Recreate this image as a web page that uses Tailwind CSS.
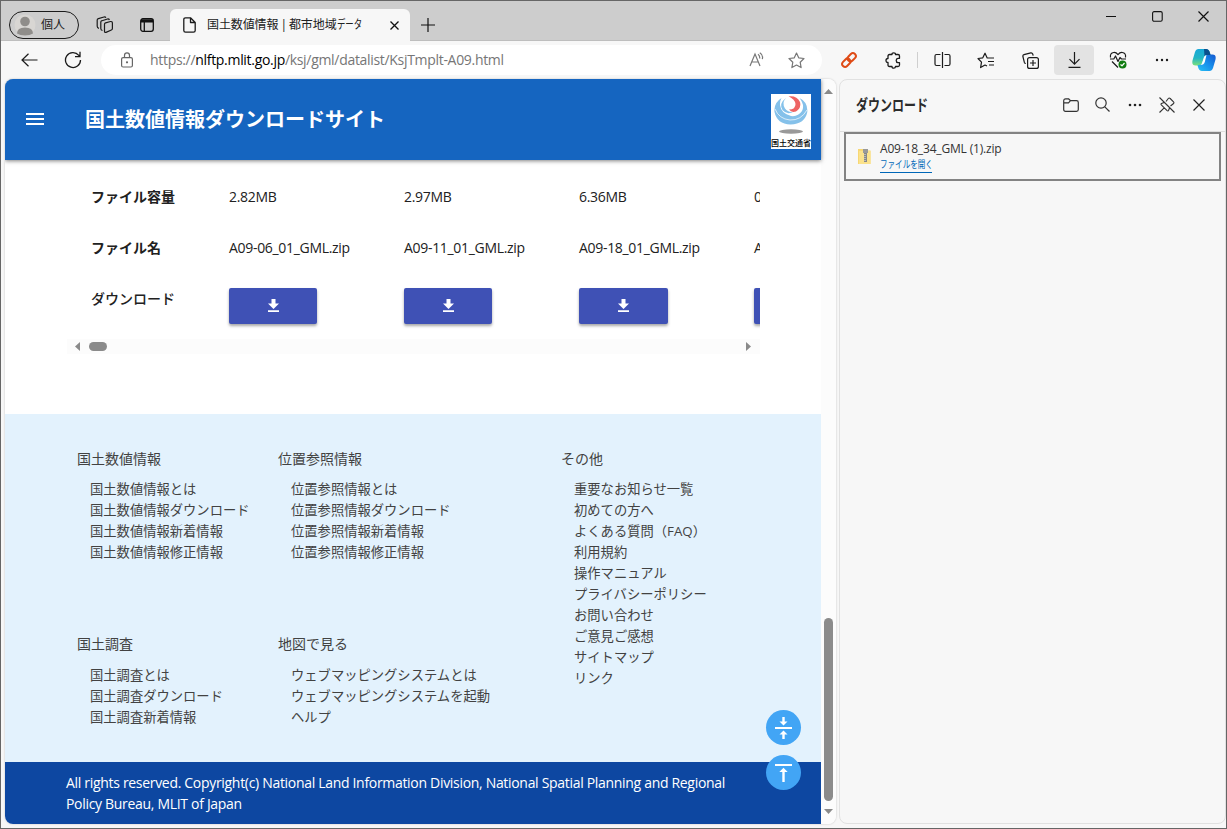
<!DOCTYPE html>
<html lang="ja">
<head>
<meta charset="utf-8">
<title>国土数値情報 | 都市地域データ</title>
<script src="https://cdn.jsdelivr.net/npm/@tailwindcss/browser@4"></script>
</head>
<body class="font-['Open_Sans','Noto_Sans_CJK_JP',sans-serif] text-[#212121]">
<div class="flex h-[829px] w-[1227px] flex-col overflow-hidden border border-[#666] bg-[#f7f7f7] whitespace-nowrap">

  <!-- Tab strip -->
  <div class="flex h-10 shrink-0 border-b border-[#bebebe] bg-[#cdcdcd]">
    <div class="mt-[10px] ml-2 flex h-7 w-[70px] items-center rounded-full border border-[#1b1b1b] pl-1">
      <svg class="size-[22px]" viewBox="0 0 22 22"><circle cx="11" cy="11" r="10.5" fill="#d8d6d3"/><circle cx="11" cy="7.5" r="4.8" fill="#8f8d8a"/><path d="M3 19.500Q3 13.500 11 13.500T19 19.500Q16 21.500 11 21.500T3 19.500Z" fill="#8f8d8a"/></svg>
      <span class="ml-[5px] text-[12px] leading-none">個人</span>
    </div>
    <svg class="mt-[15px] ml-4 h-[18px] w-[20px]" viewBox="0 0 20 18" fill="none" stroke="#1b1b1b" stroke-width="1.200" stroke-linejoin="round"><path d="M9.500 8.200Q9.500 7.200 10.500 6.900L15.500 5.500Q17.300 5.300 17.400 7V12.500Q17.400 13.700 16.400 14L11 16.400Q9.500 16.700 9.500 15.200Z"/><path d="M7.500 14.500Q5.800 14.300 5.800 12.500V6Q5.800 5 7 4.700L12.500 3Q14 2.800 14.400 4"/><path d="M4 12.300Q2.200 12 2.200 10.300V4Q2.200 3 3.400 2.600L9 1Q10.300 .7 10.900 1.800"/></svg>
    <svg class="mt-[17px] ml-[25px] size-[14px]" viewBox="0 0 14 14" fill="none" stroke="#111" stroke-width="1.300"><rect x=".7" y=".7" width="12.600" height="12.600" rx="2.200"/><path d="M1 2.200H13M1 3.600H13" stroke-width="2"/><path d="M4.300 4V13"/></svg>
    <div class="mt-[8px] ml-4 flex h-8 w-[240px] items-center rounded-t-[6px] bg-[#f7f7f7] pr-[11px] pl-[13px]">
      <svg class="h-[16px] w-[13px] shrink-0" viewBox="0 0 13 16" fill="none" stroke="#1b1b1b" stroke-width="1.300" stroke-linejoin="round"><path d="M7.500 .8H2.500Q.8 .8 .8 2.500V13.500Q.8 15.200 2.500 15.200H10.500Q12.200 15.200 12.200 13.500V5.500ZM7.500 .8V5.500H12.200"/></svg>
      <span class="ml-[11px] w-[157px] text-[12px] tracking-[-0.1px] [word-spacing:-1px]">国土数値情報 | 都市地域<span class="inline-block origin-left scale-x-[0.7]">データ</span></span>
      <svg class="ml-auto size-[9px]" viewBox="0 0 9 9" stroke="#111" stroke-width="1.300"><path d="M.5 .5L8.500 8.500M8.500 .5L.5 8.500"/></svg>
    </div>
    <svg class="mt-[17px] ml-[11px] size-[14px]" viewBox="0 0 14 14" stroke="#111" stroke-width="1.200"><path d="M7 0V14M0 7H14"/></svg>
    <div class="mt-[10px] ml-auto flex pr-[17px]">
      <svg class="size-[11px]" viewBox="0 0 11 11" stroke="#111"><path d="M0 5.500H10"/></svg>
      <svg class="ml-[35px] size-[11px]" viewBox="0 0 11 11" fill="none" stroke="#111" stroke-width="1.100"><rect x=".6" y=".6" width="9.600" height="9.600" rx="1.500"/></svg>
      <svg class="ml-[35px] size-[11px]" viewBox="0 0 11 11" stroke="#111" stroke-width="1.200"><path d="M.5 .5L10.500 10.500M10.500 .5L.5 10.500"/></svg>
    </div>
  </div>

  <!-- Address bar -->
  <div class="flex h-[38px] shrink-0 items-center">
    <svg class="ml-5 h-[14px] w-[17px] shrink-0" viewBox="0 0 17 14" fill="none" stroke="#1b1b1b" stroke-width="1.200"><path d="M7.500 .7L1 7L7.500 13.300M1 7H16.500"/></svg>
    <svg class="ml-[26px] size-[18px] shrink-0" viewBox="0 0 18 18" fill="none" stroke="#1b1b1b" stroke-width="1.300"><path d="M16.500 9A7.500 7.500 0 1 1 14.800 4.300L16 5.600M16 .8V5.700H11"/></svg>
    <div class="ml-[19px] flex h-[30px] w-[721px] shrink-0 items-center rounded-full bg-white">
      <svg class="ml-5 h-4 w-3" viewBox="0 0 12 16" fill="none" stroke="#666" stroke-width="1.200"><rect x=".6" y="5.600" width="10.800" height="9.400" rx="1.500"/><path d="M3.500 5.500V3.400Q3.500 .8 6 .8T8.500 3.400V5.500"/><circle cx="6" cy="10.300" r=".5" fill="#666"/></svg>
      <span class="ml-[17px] -mt-px text-[14px] tracking-[-0.31px] text-[#767676]">https://<span class="text-black">nlftp.mlit.go.jp</span>/ksj/gml/datalist/KsjTmplt-A09.html</span>
      <svg class="ml-auto h-4 w-[17px]" viewBox="0 0 17 16" fill="none" stroke="#777" stroke-width="1.200"><path d="M1 14L6 2L11 14M2.800 10H9.300M9 2.200Q11 3.500 10.700 6.500M10.800 .8Q14.500 3 13.300 7.200"/></svg>
      <svg class="mr-[17px] ml-[22px] size-[17px]" viewBox="0 0 17 17" fill="none" stroke="#777" stroke-width="1.200" stroke-linejoin="round"><path d="M8.500 1L10.700 5.800L16 6.500L12.200 10.200L13.100 15.600L8.500 13L3.900 15.600L4.800 10.200L1 6.500L6.300 5.800Z"/></svg>
    </div>
    <div class="ml-[5px] flex items-center">
      <div class="flex w-11 justify-center"><svg class="size-[18px]" viewBox="0 0 18 18" fill="none" stroke="#df4b16" stroke-width="2"><rect x="-4.600" y="-2.900" width="9.200" height="5.800" rx="2.900" transform="translate(11.700 6.300) rotate(-45)"/><rect x="-4.600" y="-2.900" width="9.200" height="5.800" rx="2.900" transform="translate(6.300 11.700) rotate(-45)"/></svg></div>
      <div class="flex w-11 justify-center"><svg class="size-[17px]" viewBox="0 0 17 17" fill="none" stroke="#1b1b1b" stroke-width="1.300" stroke-linejoin="round"><path d="M4.500 2.500H7Q6.800 .8 8.700 .8T10.500 2.500H13Q14.500 2.500 14.500 4V6.300H13Q11.200 6.500 11.200 8.500T13 10.700H14.500V13Q14.500 14.500 13 14.500H10.500Q10.500 16.200 8.700 16.200T7 14.500H4.500Q3 14.500 3 13V10.500Q1 10.500 1 8.500T3 6.500V4Q3 2.500 4.500 2.500Z"/></svg></div>
      <div class="flex w-[5px] justify-center"><div class="h-4 w-px bg-[#cfcfcf]"></div></div>
      <div class="flex w-11 justify-center"><svg class="h-4 w-[17px]" viewBox="0 0 17 16" fill="none" stroke="#1b1b1b" stroke-width="1.200"><path d="M6.500 2.500H2.500Q1 2.500 1 4V12Q1 13.500 2.500 13.500H6.500M10.500 2.500H14.500Q16 2.500 16 4V12Q16 13.500 14.500 13.500H10.500M8.500 0V16"/></svg></div>
      <div class="flex w-11 justify-center"><svg class="h-[17px] w-[18px]" viewBox="0 0 18 17" fill="none" stroke="#1b1b1b" stroke-width="1.200" stroke-linejoin="round"><path d="M12 6H10.200L8 1.200L5.800 5.800L1 6.500L4.500 10.200L3.600 15.600L8 13L10 14M11 6H17M11 9.500H17M12 13H17"/></svg></div>
      <div class="flex w-11 justify-center"><svg class="size-[17px]" viewBox="0 0 17 17" fill="none" stroke="#1b1b1b" stroke-width="1.200"><rect x="5.600" y="5.600" width="10.800" height="10.800" rx="2"/><path d="M11 8V14M8 11H14M3.800 11.500Q2.700 11.500 2.300 10.200L.9 4.500Q.6 3 2 2.600L8.800 .8Q10.200 .6 10.700 2L11.200 3.600"/></svg></div>
      <div class="flex w-11 justify-center"><div class="flex h-[30px] w-10 items-center justify-center rounded-[4px] bg-[#e3e3e3]"><svg class="h-4 w-[13px]" viewBox="0 0 13 16" fill="none" stroke="#1b1b1b" stroke-width="1.200"><path d="M6.500 0V12M1.500 7.200L6.500 12.200L11.500 7.200M.5 15.300H12.500"/></svg></div></div>
      <div class="flex w-11 justify-center"><svg class="size-[18px]" viewBox="0 0 18 18" fill="none" stroke="#1b1b1b" stroke-width="1.200" stroke-linejoin="round"><path d="M1.500 6.500Q.8 2 4.700 1.500Q7 1.200 9 3.600Q11 1.200 13.300 1.500Q17.200 2 16.500 6.500M1 8H4.800L6.500 5L9 10.500L11 6.500L12.500 8H17M3 10.500L9 16.500"/><circle cx="13.500" cy="13.500" r="4" fill="#107c10" stroke="none"/><path d="M11.500 13.500L13 14.800L15.500 12" stroke="#fff"/></svg></div>
      <div class="flex w-11 justify-center"><svg class="h-1 w-[14px]" viewBox="0 0 14 4" fill="#1b1b1b"><circle cx="2" cy="2" r="1.200"/><circle cx="7" cy="2" r="1.200"/><circle cx="12" cy="2" r="1.200"/></svg></div>
      <svg class="ml-2 size-6 shrink-0" viewBox="0 0 24 24">
        <defs><linearGradient id="cpA" x1="0" y1="0" x2="0" y2="1"><stop stop-color="#18a8d8"/><stop offset=".55" stop-color="#22b5c5"/><stop offset="1" stop-color="#7be07b"/></linearGradient><linearGradient id="cpB" x1="0" y1="1" x2="1" y2="0"><stop stop-color="#28c2f3"/><stop offset=".5" stop-color="#178fec"/><stop offset="1" stop-color="#1558cf"/></linearGradient></defs>
        <path d="M6.500 1H14Q17 1 18 5L18.500 7H15.500Q13 7 12 10L10.500 14.500Q9.500 17.500 6.500 17.500H3.500Q-.5 17.500 .5 12.500L3 4Q4 1 6.500 1Z" fill="url(#cpA)"/>
        <path d="M17.500 23H10Q7 23 6 19L5.500 17Q9.500 17.500 10.500 14.500L12 10Q13 6.500 16 6.500H20.500Q24.500 6.500 23.500 11.500L21 20Q20 23 17.500 23Z" fill="url(#cpB)"/>
        <path d="M12 1H14Q17 1 18 5L18.500 7H15Q13.500 7 12.500 8.500Z" fill="#0b4f8c"/>
        <path d="M10 15L12 9Q12.700 7.400 14.500 7L12.800 14Q12 17 8.500 17Q9.500 16.500 10 15Z" fill="#fff"/>
      </svg>
    </div>
  </div>

  <div class="flex h-[745px] shrink-0 pl-1">
    <!-- Web page -->
    <main class="relative flex w-[831px] shrink-0 overflow-hidden rounded-[8px] bg-white shadow-[0_0_2px_#bbb]">
      <div class="flex w-[816px] shrink-0 flex-col">
        <header class="z-10 flex h-[81px] shrink-0 items-center bg-[#1565c0] pr-[10px] pl-[21px] shadow-[0_1px_4px_rgba(0,0,0,0.5)]">
          <svg class="-mt-px h-[12px] w-[18px]" viewBox="0 0 18 12" fill="#fff"><path d="M0 0H18V2H0ZM0 5H18V7H0ZM0 10H18V12H0Z"/></svg>
          <h1 class="ml-[41px] text-[20px] font-bold text-white">国土数値情報ダウンロードサイト</h1>
          <div class="ml-auto mt-1 flex h-[55px] w-10 flex-col items-center bg-white pt-[2px]">
            <svg class="h-[38px] w-[34px] shrink-0" viewBox="0 0 34 38">
              <path d="M7.500 2Q-.5 7 .5 16Q3 28 16.500 28.500Q31 28 33.300 16Q34 6 25.500 2Q31 9 28 15Q24 21 17 20Q7 17.500 6 9Q5.800 5 7.500 2Z" fill="#85c1ea"/>
              <path d="M1 13Q5 23 16 24Q27 24.500 33 14" fill="none" stroke="#fff" stroke-width=".7"/>
              <path d="M12 2Q7.500 7 11 12.500Q14.500 17 20 15.500Q13 19.500 8.500 14Q4.500 7.500 12 2Z" fill="#85c1ea"/>
              <path d="M14.500 .3Q23 -.7 26 6Q27.500 12 22 15.500Q17.500 17 15 13.500Q21.500 13.500 21.500 8Q21 3.500 14.500 .3Z" fill="#ee6464"/>
              <ellipse cx="17" cy="35.500" rx="12" ry="2.200" fill="#999"/>
            </svg>
            <span class="mt-[3px] text-[8px] leading-[12px] font-medium text-black">国土交通省</span>
          </div>
        </header>

        <section class="h-[254px] shrink-0 pl-[62px]">
          <div class="grid w-[693px] grid-cols-[162px_175px_175px_175px_6px] grid-rows-[51px_51px_75px] overflow-hidden pt-[11px] text-[14px] leading-[51px] tracking-[-0.31px]">
            <div class="pl-6 font-bold tracking-normal">ファイル容量</div><div>2.82MB</div><div>2.97MB</div><div>6.36MB</div><div>0</div>
            <div class="pl-6 font-bold tracking-normal">ファイル名</div><div>A09-06_01_GML.zip</div><div>A09-11_01_GML.zip</div><div>A09-18_01_GML.zip</div><div>A</div>
            <div class="pl-6 font-medium tracking-normal">ダウンロード</div>
            <div class="pt-[15px]"><div class="flex h-9 w-[88px] items-center justify-center rounded-[2px] bg-[#3f51b5] shadow-[0_2px_3px_rgba(0,0,0,0.35)]"><svg class="-mt-px h-[13px] w-[11px]" viewBox="0 0 11 13" fill="#fff"><path d="M3.500 0H7.500V4.500H11L5.500 10L0 4.500H3.500ZM0 11.200H11V13H0Z"/></svg></div></div>
            <div class="pt-[15px]"><div class="flex h-9 w-[88px] items-center justify-center rounded-[2px] bg-[#3f51b5] shadow-[0_2px_3px_rgba(0,0,0,0.35)]"><svg class="-mt-px h-[13px] w-[11px]" viewBox="0 0 11 13" fill="#fff"><path d="M3.500 0H7.500V4.500H11L5.500 10L0 4.500H3.500ZM0 11.200H11V13H0Z"/></svg></div></div>
            <div class="pt-[15px]"><div class="flex h-9 w-[89px] items-center justify-center rounded-[2px] bg-[#3f51b5] shadow-[0_2px_3px_rgba(0,0,0,0.35)]"><svg class="-mt-px h-[13px] w-[11px]" viewBox="0 0 11 13" fill="#fff"><path d="M3.500 0H7.500V4.500H11L5.500 10L0 4.500H3.500ZM0 11.200H11V13H0Z"/></svg></div></div>
            <div class="pt-[15px]"><div class="h-9 w-[88px] rounded-[2px] bg-[#3f51b5] shadow-[0_2px_3px_rgba(0,0,0,0.35)]"></div></div>
          </div>
          <div class="-mt-[9px] flex h-[15px] w-[693px] items-center bg-[#fcfcfc] pr-[9px] pl-2">
            <svg class="h-[9px] w-[5px]" viewBox="0 0 5 9" fill="#8a8a8a"><path d="M5 0V9L0 4.500Z"/></svg>
            <div class="ml-[9px] h-[9px] w-[18px] rounded-full bg-[#8b8b8b]"></div>
            <svg class="ml-auto h-[9px] w-[5px]" viewBox="0 0 5 9" fill="#8a8a8a"><path d="M0 0V9L5 4.500Z"/></svg>
          </div>
        </section>

        <nav class="grid h-[348px] shrink-0 grid-cols-[201px_283px_1fr] grid-rows-[185px_1fr] bg-[#e3f2fd] pt-[34px] pl-[72px] text-[13.300px] leading-[21px] text-[#424242]">
          <div><h2 class="text-[14px]">国土数値情報</h2><ul class="mt-[10px] pl-[13px]"><li>国土数値情報とは</li><li>国土数値情報ダウンロード</li><li>国土数値情報新着情報</li><li>国土数値情報修正情報</li></ul></div>
          <div><h2 class="text-[14px]">位置参照情報</h2><ul class="mt-[10px] pl-[13px]"><li>位置参照情報とは</li><li>位置参照情報ダウンロード</li><li>位置参照情報新着情報</li><li>位置参照情報修正情報</li></ul></div>
          <div class="row-span-2"><h2 class="text-[14px]">その他</h2><ul class="mt-[10px] pl-[13px]"><li>重要なお知らせ一覧</li><li>初めての方へ</li><li>よくある質問（FAQ）</li><li>利用規約</li><li>操作マニュアル</li><li>プライバシーポリシー</li><li>お問い合わせ</li><li>ご意見ご感想</li><li>サイトマップ</li><li>リンク</li></ul></div>
          <div><h2 class="text-[14px]">国土調査</h2><ul class="mt-[11px] pl-[13px]"><li>国土調査とは</li><li>国土調査ダウンロード</li><li>国土調査新着情報</li></ul></div>
          <div><h2 class="text-[14px]">地図で見る</h2><ul class="mt-[11px] pl-[13px]"><li>ウェブマッピングシステムとは</li><li>ウェブマッピングシステムを起動</li><li>ヘルプ</li></ul></div>
        </nav>

        <footer class="h-[62px] shrink-0 bg-[#0d47a1] pt-[10px] pl-[61px] text-[14px] leading-[21px] tracking-[-0.31px] text-white">All rights reserved. Copyright(c) National Land Information Division, National Spatial Planning and Regional<br>Policy Bureau, MLIT of Japan</footer>
      </div>

      <!-- Scrollbar -->
      <div class="flex w-[15px] flex-col items-center bg-[#fcfcfc] pt-[10px] pb-[10px]">
        <svg class="h-[5px] w-[9px] shrink-0" viewBox="0 0 9 5" fill="#8a8a8a"><path d="M0 5H9L4.500 0Z"/></svg>
        <div class="mt-auto h-[183px] w-[9px] rounded-full bg-[#8b8b8b]"></div>
        <svg class="mt-2 h-[5px] w-[9px] shrink-0" viewBox="0 0 9 5" fill="#8a8a8a"><path d="M0 0H9L4.500 5Z"/></svg>
      </div>

      <!-- Floating scroll buttons -->
      <div class="absolute top-[631px] left-[761px] z-20 flex flex-col gap-[10px]">
        <div class="flex size-[35px] items-center justify-center rounded-full bg-[#42a5f5]"><svg class="h-[22px] w-[17px]" viewBox="0 0 17 22" fill="#fff"><path d="M0 10H17V12H0ZM7.300 0H9.700V4.500H12.500L8.500 8.500L4.500 4.500H7.300ZM7.300 22H9.700V17.500H12.500L8.500 13.500L4.500 17.500H7.300Z"/></svg></div>
        <div class="flex size-[35px] items-center justify-center rounded-full bg-[#42a5f5]"><svg class="h-[18px] w-[17px]" viewBox="0 0 17 18" fill="#fff"><path d="M0 0H17V2H0ZM7.300 18V8H4.300L8.500 3.800L12.700 8H9.700V18Z"/></svg></div>
      </div>
    </main>

    <!-- Downloads panel -->
    <aside class="ml-[3px] flex w-[387px] shrink-0 flex-col rounded-[8px] border border-[#e1e1e1] bg-[#f7f7f7]">
      <div class="flex h-[52px] shrink-0 items-center border-b border-[#dedede] pr-[20px] pb-[2px] pl-4">
        <h2 class="w-[90px] origin-left scale-x-[0.75] text-[16px] font-bold text-[#2b2b2b]">ダウンロード</h2>
        <svg class="ml-auto h-[14px] w-4" viewBox="0 0 16 14" fill="none" stroke="#333" stroke-width="1.200" stroke-linejoin="round"><path d="M.7 3Q.7 .8 2.700 .8H5.500L7.500 2.700H13.500Q15.300 2.700 15.300 4.500V11.500Q15.300 13.300 13.500 13.300H2.500Q.7 13.300 .7 11.500ZM.7 4.800H5.500L7.500 2.700"/></svg>
        <svg class="ml-[16px] size-[15px]" viewBox="0 0 15 15" fill="none" stroke="#333" stroke-width="1.200"><circle cx="6" cy="6" r="5.200"/><path d="M9.800 9.800L14.500 14.500"/></svg>
        <svg class="ml-[18px] h-1 w-[14px]" viewBox="0 0 14 4" fill="#222"><circle cx="2" cy="2" r="1.300"/><circle cx="7" cy="2" r="1.300"/><circle cx="12" cy="2" r="1.300"/></svg>
        <svg class="ml-[17px] size-4" viewBox="0 0 16 16" fill="none" stroke="#333" stroke-width="1.100" stroke-linejoin="round"><path d="M.5 .5L15.500 15.500M7 4.500L9.300 1.500Q10.200 .5 11.200 1.500L14.500 4.800Q15.500 5.800 14.300 6.700L11.500 9M5 5.500L2.500 6.500Q1.500 7 2.300 7.900L8.100 13.700Q9 14.500 9.500 13.500L10.500 11M5.200 10.800L.5 15.500"/></svg>
        <svg class="ml-[18px] size-[12px]" viewBox="0 0 12 12" stroke="#222" stroke-width="1.200"><path d="M.5 .5L11.500 11.500M11.500 .5L.5 11.500"/></svg>
      </div>
      <div class="ml-1 flex h-[49px] w-[377px] border-2 border-[#838383] pl-3">
        <svg class="mt-[14px] h-4 w-[13px]" viewBox="0 0 13 16"><path d="M0 1H5L6 2.500H12.500V16H0Z" fill="#f7d774"/><path d="M1 3H12.500V16H1Z" fill="#fbe28c"/><path d="M6 1H9V14H6Z" fill="#888"/><path d="M7 2V13" stroke="#e9e9e9" stroke-width="1" stroke-dasharray="1 1"/><path d="M5 1H10V5H5Z" fill="#999"/></svg>
        <div class="ml-[9px] pt-[7px]">
          <div class="text-[12px] leading-4 tracking-[-0.17px] text-[#333]">A09-18_34_GML (1).zip</div>
          <div class="h-[16px] w-[52px] border-b border-[#0067b8] text-[#0067b8]"><div class="origin-left scale-x-[0.72] text-[10.500px] leading-[14px]">ファイルを開く</div></div>
        </div>
      </div>
    </aside>
  </div>
</div>
</body>
</html>
